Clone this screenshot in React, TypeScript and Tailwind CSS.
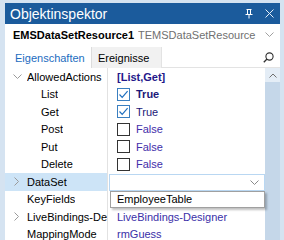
import React from "react";

const font = { fontFamily: '"Liberation Sans", Arial, sans-serif' };

function ChevronDown({ className }: { className?: string }) {
  return (
    <svg width="9" height="6" viewBox="0 0 9 6" className={className}>
      <path d="M0.5 0.5 L4.5 4.5 L8.5 0.5" fill="none" stroke="currentColor" strokeWidth="1" />
    </svg>
  );
}

function ChevronRight({ className }: { className?: string }) {
  return (
    <svg width="6" height="9" viewBox="0 0 6 9" className={className}>
      <path d="M0.5 0.5 L4.5 4.5 L0.5 8.5" fill="none" stroke="currentColor" strokeWidth="1" />
    </svg>
  );
}

function Check({ checked }: { checked: boolean }) {
  return (
    <div
      className={
        "w-[13px] h-[13px] border flex items-center justify-center shrink-0 bg-white " +
        (checked ? "border-[#3a7fc0]" : "border-[#333333]")
      }
    >
      {checked && (
        <svg width="11" height="11" viewBox="0 0 11 11">
          <path d="M1.5 5.5 L4.2 8.3 L9.6 2.2" fill="none" stroke="#1f6fbf" strokeWidth="1.2" />
        </svg>
      )}
    </div>
  );
}

type Row = {
  name: string;
  indent: 0 | 1;
  expander?: "down" | "right";
  value?: React.ReactNode;
  selected?: boolean;
};

export default function App() {
  const rows: Row[] = [
    {
      name: "AllowedActions",
      indent: 0,
      expander: "down",
      value: <span className="font-bold text-[#24178a]">[List,Get]</span>,
    },
    {
      name: "List",
      indent: 1,
      value: (
        <div className="flex items-center gap-[6px]">
          <Check checked />
          <span className="font-bold text-[#1c1878]">True</span>
        </div>
      ),
    },
    {
      name: "Get",
      indent: 1,
      value: (
        <div className="flex items-center gap-[6px]">
          <Check checked />
          <span className="text-[#1c1878]">True</span>
        </div>
      ),
    },
    {
      name: "Post",
      indent: 1,
      value: (
        <div className="flex items-center gap-[6px]">
          <Check checked={false} />
          <span className="text-[#3f2eaa]">False</span>
        </div>
      ),
    },
    {
      name: "Put",
      indent: 1,
      value: (
        <div className="flex items-center gap-[6px]">
          <Check checked={false} />
          <span className="text-[#3f2eaa]">False</span>
        </div>
      ),
    },
    {
      name: "Delete",
      indent: 1,
      value: (
        <div className="flex items-center gap-[6px]">
          <Check checked={false} />
          <span className="text-[#3f2eaa]">False</span>
        </div>
      ),
    },
    { name: "DataSet", indent: 0, expander: "right", selected: true },
    { name: "KeyFields", indent: 0 },
    {
      name: "LiveBindings-Designer",
      indent: 0,
      expander: "right",
      value: <span className="text-[#3a2fa8]">LiveBindings-Designer</span>,
    },
    {
      name: "MappingMode",
      indent: 0,
      value: <span className="text-[#3a2fa8]">rmGuess</span>,
    },
  ];

  return (
    <div
      style={font}
      className="w-[284px] h-[240px] bg-[#d5e3f1] pl-[5px] pr-[4px] pt-[3px] flex flex-col overflow-hidden"
    >
      {/* title bar */}
      <div className="h-[21px] bg-[#1b5b9c] flex items-center pl-[5px] pr-[5px] shrink-0">
        <span className="text-white text-[14px] leading-none flex-1">Objektinspektor</span>
        <svg width="8" height="10" viewBox="0 0 8 10" className="mr-[12px]">
          <path d="M1.5 0.5 H6.5 M2.5 0.5 V5 M5.5 0.5 V5 M0.5 5.5 H7.5 M4 5.5 V9.5" fill="none" stroke="white" strokeWidth="1" />
        </svg>
        <svg width="9" height="9" viewBox="0 0 9 9" className="mr-[1px]">
          <path d="M0.5 0.5 L8.5 8.5 M8.5 0.5 L0.5 8.5" fill="none" stroke="#e6eef7" strokeWidth="1" />
        </svg>
      </div>

      <div className="flex-1 bg-white flex flex-col min-h-0">
        {/* component selector */}
        <div className="h-[23px] flex items-center pl-[8px] pr-[6px] pb-[1px] shrink-0">
          <span className="font-bold text-[11px] text-black">EMSDataSetResource1</span>
          <span className="text-[11px] text-[#707070] ml-[4px] flex-1 whitespace-nowrap overflow-hidden">
            TEMSDataSetResource
          </span>
          <ChevronDown className="text-[#a0a0a0] ml-[4px]" />
        </div>

        {/* tabs */}
        <div className="h-[21px] flex bg-[#f1f1f1] shrink-0">
          <div className="w-[87px] bg-white border-r border-[#dcdcdc] flex items-center pl-[10px] pt-[2px]">
            <span className="text-[11px] text-[#1c6cc0]">Eigenschaften</span>
          </div>
          <div className="w-[69px] flex items-center pl-[6px] pt-[2px]">
            <span className="text-[11px] text-black">Ereignisse</span>
          </div>
          <div className="flex-1 bg-white border-l border-b border-[#e3e3e3] flex items-center justify-end pr-[6px]">
            <svg width="11" height="11" viewBox="0 0 11 11">
              <circle cx="6.5" cy="4.5" r="3.6" fill="none" stroke="#303030" strokeWidth="1.1" />
              <path d="M4 7 L0.8 10.2" stroke="#303030" strokeWidth="1.3" />
            </svg>
          </div>
        </div>

        {/* grid */}
        <div className="flex-1 flex min-h-0 relative">
          <div className="w-[260px] flex flex-col">
            {rows.map((r, i) => (
              <div key={i} className="h-[17.5px] flex shrink-0">
                <div
                  className={
                    "w-[103px] flex items-center overflow-hidden whitespace-nowrap border-r border-[#e2e2e2] " +
                    (r.selected ? "bg-[#cde4f7]" : "")
                  }
                >
                  <div className="w-[22px] shrink-0 flex items-center justify-center pl-[2px]">
                    {r.expander === "down" && <ChevronDown className="text-[#9a9a9a]" />}
                    {r.expander === "right" && <ChevronRight className="text-[#9a9a9a]" />}
                  </div>
                  <span className={"text-[11px] text-black overflow-hidden " + (r.indent ? "pl-[14px]" : "")}>
                    {r.name}
                  </span>
                </div>
                <div className="flex-1 flex items-center pl-[9px] text-[11px] whitespace-nowrap overflow-hidden">
                  {r.value}
                </div>
              </div>
            ))}
          </div>
          {/* scrollbar */}
          <div className="w-[15px] flex flex-col bg-[#c5d7e9]">
            <div className="h-[14px] bg-[#e4edf6] flex items-center justify-center">
              <svg width="8" height="5" viewBox="0 0 8 5">
                <path d="M0.5 4.5 L4 1 L7.5 4.5" fill="none" stroke="#707070" strokeWidth="1" />
              </svg>
            </div>
          </div>

          {/* DataSet combo box */}
          <div className="absolute left-[104px] top-[106px] w-[156px] h-[17px] bg-white border border-[#b9d7f2] flex items-center justify-end pr-[5px]">
            <ChevronDown className="text-[#8a8a8a]" />
          </div>
          {/* dropdown list */}
          <div className="absolute left-[105px] top-[123px] w-[155px] h-[17px] bg-white border border-[#a0a0a0] shadow-[2px_2px_2px_rgba(0,0,0,0.25)] flex items-center pl-[6px]">
            <span className="text-[11px] text-black">EmployeeTable</span>
          </div>
        </div>
      </div>
    </div>
  );
}
